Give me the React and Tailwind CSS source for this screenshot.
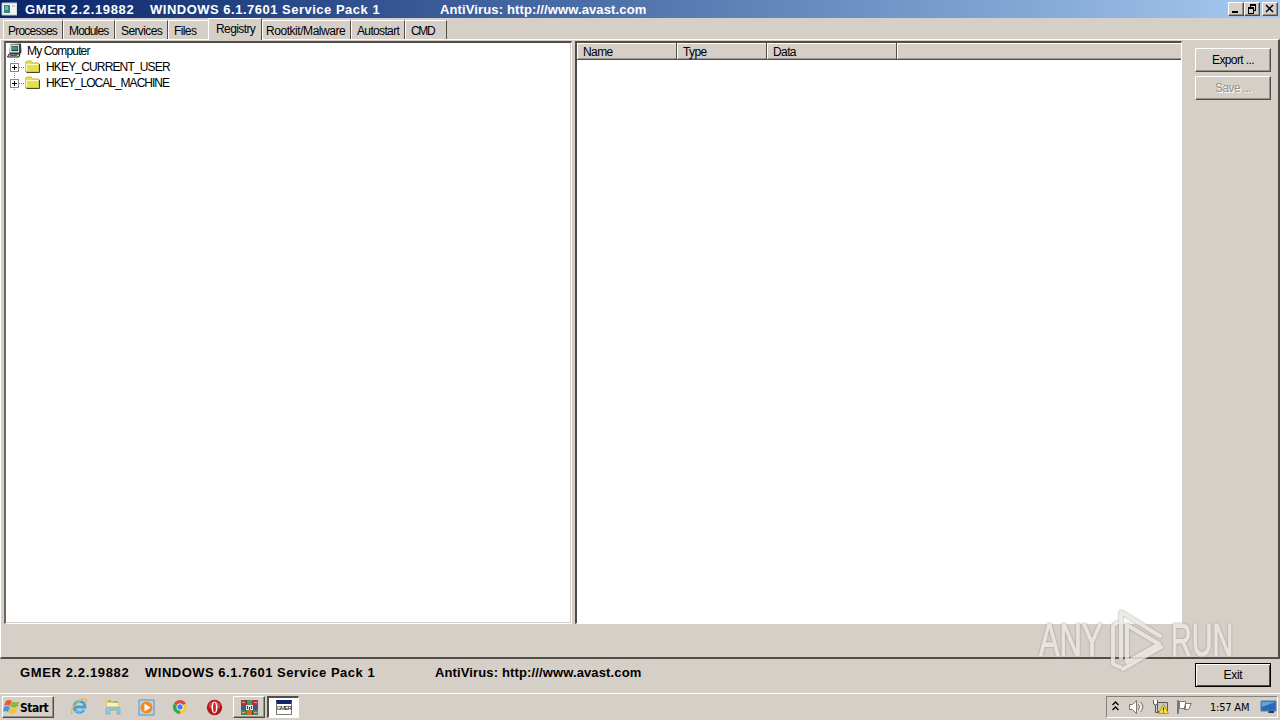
import { useState } from 'react';
import { clsx } from 'clsx';

const TABS = [
  { name: 'Processes', box: 'w-[60px] pl-[4px]', text: 'tracking-[-0.78px]' },
  { name: 'Modules', box: 'w-[52px] pl-[5px]', text: 'tracking-[-0.85px]' },
  { name: 'Services', box: 'w-[53px] pl-[5px]', text: 'tracking-[-0.6px]' },
  { name: 'Files', box: 'w-[40px] pl-[5px]', text: 'tracking-[-0.6px]' },
  { name: 'Registry', box: 'w-[54px] pl-[7px]', text: 'tracking-[-0.6px]' },
  { name: 'Rootkit/Malware', box: 'w-[89px] pl-[3px]', text: 'tracking-[-0.45px]' },
  { name: 'Autostart', box: 'w-[54px] pl-[5px]', text: 'tracking-[-0.65px]' },
  { name: 'CMD', box: 'w-[42px] pl-[5px]', text: 'tracking-[-1.3px]' },
];

const KEYS = [
  { name: 'HKEY_CURRENT_USER', text: 'tracking-[-0.84px]' },
  { name: 'HKEY_LOCAL_MACHINE', text: 'tracking-[-0.98px]' },
];

const COLUMNS = [
  { name: 'Name', width: 'w-[100px]' },
  { name: 'Type', width: 'w-[90px]' },
  { name: 'Data', width: 'w-[130px]' },
];

const raised = 'border border-t-white border-l-white border-r-[#504c48] border-b-[#504c48] shadow-[inset_-1px_-1px_0_#98928b]';

function VersionText() {
  return (
    <div className="flex whitespace-pre text-[13px] leading-[18px] font-bold">
      <span className="w-[125px] tracking-[0.63px]">GMER 2.2.19882</span>
      <span className="w-[290px] tracking-[0.5px]">WINDOWS 6.1.7601 Service Pack 1</span>
      <span className="tracking-[0.13px]">AntiVirus: http:///www.avast.com</span>
    </div>
  );
}

function CaptionButton({ children, className }) {
  return (
    <button className={clsx('h-[14px] w-4 bg-[#d6cfc8]', raised, className)}>
      <svg viewBox="0 0 14 12" className="block h-3 w-[14px]" fill="none" stroke="#000" shapeRendering="crispEdges">
        {children}
      </svg>
    </button>
  );
}

function TitleBar() {
  return (
    <div className="flex h-[18px] items-center bg-linear-to-r from-[#0a246a] to-[#a6caf0] pr-[2px] text-white">
      <svg width="16" height="16" viewBox="0 0 16 16" className="ml-[1px] shrink-0">
        <path d="M1 2h15v12H1z" fill="#f3f5f2" stroke="#b7c8ca" />
        <path d="M3 4h6v8H3z" fill="#33857e" />
        <path d="M4 5h3v4H4z" fill="#74b8a8" />
        <path d="M11 4h3v2h-3z" fill="#c9d0d0" />
      </svg>
      <div className="ml-[8px] grow pt-[1px]"><VersionText /></div>
      <CaptionButton><path d="M3 9h6" strokeWidth="2" /></CaptionButton>
      <CaptionButton>
        <path d="M5 2h6M3 5h6" strokeWidth="2" />
        <path d="M5.5 2v3M10.5 2v5.5H9M3.5 5v5.5h5V5" />
      </CaptionButton>
      <CaptionButton className="ml-[2px]">
        <path d="M3 2l7 7M10 2L3 9" strokeWidth="1.5" shapeRendering="auto" />
      </CaptionButton>
    </div>
  );
}

function TabStrip({ active, onSelect }) {
  return (
    <div className="flex h-[22px] items-end pl-[3px]">
      {TABS.map(({ name, box, text }) => (
        <button
          key={name}
          onClick={() => onSelect(name)}
          className={clsx(
            'whitespace-nowrap border-t border-l border-r border-t-white border-l-white text-left',
            box, text,
            active === name ? 'z-10 h-[22px] border-t-[#eeeae5] bg-[#d6cfc8] pb-[1px]' : 'mb-[1px] h-[19px] pt-[1px]',
            name === 'Files' && active === 'Registry' ? 'border-r-transparent' : 'border-r-[#504c48]'
          )}
        >
          {name}
        </button>
      ))}
    </div>
  );
}

function ComputerIcon() {
  return (
    <svg width="16" height="16" viewBox="0 0 16 16">
      <path d="M3 1l11-.5.5 9-2 2H2.5z" fill="#36413e" />
      <path d="M3 1.5h9v8H3z" fill="#d8dcd7" />
      <path d="M4.5 3h6.5v5H4.5z" fill="#18383b" />
      <path d="M5 3.5h5.5V7H5z" fill="#448d90" />
      <path d="M2 11h11l-1 3H.5z" fill="#cbc9c1" stroke="#292929" />
      <path d="M3 12.5h7" stroke="#565656" />
    </svg>
  );
}

function FolderIcon() {
  return (
    <svg width="16" height="16" viewBox="0 0 16 16">
      <path d="M0 12V4l2-2h4l2 2h6v9H1z" fill="#e2e04c" stroke="#c2b94a" />
      <path d="M1.5 11.5v-6h12" fill="none" stroke="#fffcbb" />
      <path d="M14.5 5v8.500H1.500" fill="none" stroke="#4b4720" />
    </svg>
  );
}

function RegistryTree() {
  return (
    <div className="w-[568px] border-t-2 border-l-2 border-r border-b border-t-[#504c48] border-l-[#6a6661] border-r-white border-b-white bg-white shadow-[inset_-1px_-1px_0_#d6cfc8]">
      <div className="flex h-4 items-center pl-[1px] tracking-[-0.86px]">
        <ComputerIcon />
        <span className="ml-1">My Computer</span>
      </div>
      {KEYS.map(({ name, text }) => (
        <div key={name} className="flex h-4 items-center pl-[3px]">
          <svg width="16" height="16" viewBox="0 0 16 16" fill="none" shapeRendering="crispEdges">
            <path d="M5.5 0v16M10 8.5h6" stroke="#888" strokeDasharray="1 1" />
            <path d="M1.5 4.5h8v8h-8z" fill="#fff" stroke="#888" />
            <path d="M3 8.5h5M5.5 6v5" stroke="#000" />
          </svg>
          <FolderIcon />
          <span className={clsx('ml-[5px]', text)}>{name}</span>
        </div>
      ))}
    </div>
  );
}

function ValueList() {
  return (
    <div className="ml-[3px] w-[607px] border-t-2 border-l-2 border-r border-b border-t-[#504c48] border-l-[#504c48] border-r-white border-b-white bg-white">
      <div className="flex h-[17px] border-b border-[#504c48] bg-[#d6cfc8] leading-4 shadow-[inset_0_1px_0_white,inset_0_-1px_0_#a09a93]">
        {COLUMNS.map(({ name, width }) => (
          <div key={name} className={clsx('border-l border-r border-l-white border-r-[#504c48] pt-[1px] pl-[5px] tracking-[-0.6px]', width)}>{name}</div>
        ))}
        <div className="grow border-l border-white" />
      </div>
    </div>
  );
}

function Watermark() {
  return (
    <div className="pointer-events-none absolute top-[608px] left-[1039px] flex h-16 w-[196px] items-center text-[47px] text-[#ebe8e4] opacity-85 drop-shadow-[0_0_1px_#918b84] [-webkit-text-stroke:1.2px_#ebe8e4]">
      <span className="w-[70px] origin-left scale-x-[0.655] whitespace-nowrap">ANY</span>
      <svg width="62" height="64" viewBox="0 0 62 64" fill="none" stroke="currentColor" strokeWidth="4" strokeLinecap="round" strokeLinejoin="round" className="shrink-0">
        <path d="M8 15l-4 3v38l7 3" />
        <path d="M12 50V4l39 24" />
        <path d="M18 17l32 19-32 18z" />
        <path d="M14 61l38-22" />
      </svg>
      <span className="origin-left scale-x-[0.61] whitespace-nowrap">RUN</span>
    </div>
  );
}

function TaskbarIcons() {
  return (
    <div className="flex items-center">
      <svg width="18" height="18" viewBox="0 0 18 18" className="ml-[16px]" fill="none">
        <path d="M14 12a5.5 5.5 0 1 1 1-3H5" stroke="#3fa0dc" strokeWidth="2.8" />
        <path d="M13 11.5a5 5 0 0 1-8 1" stroke="#85cdf0" />
        <path d="M2 16C-1 11 11-1 16 1.500c1.500 1 0 3-1 4.500" stroke="#dfb94c" strokeWidth="1.5" />
      </svg>
      <svg width="18" height="18" viewBox="0 0 18 18" className="ml-4">
        <path d="M2 2h5l1 1h7v10H2z" fill="#e5c968" />
        <path d="M3 5h11v6H3z" fill="#fff2ad" />
        <path d="M4 3h3M9 4h5" stroke="#56a6a3" />
        <path d="M2 16v-5q0-2 2-2h10q2 0 2 2v5h-3v-4H6v4z" fill="#8dc8e9" stroke="#62a8d0" strokeWidth=".6" />
      </svg>
      <svg width="17" height="17" viewBox="0 0 17 17" className="ml-4">
        <path d="M1 1h15v15H1z" fill="#b5d6ea" stroke="#5d91b5" />
        <circle cx="8.5" cy="8.5" r="6" fill="#f48a1c" />
        <path d="M6.5 4.5l6 4-6 4z" fill="#fff" />
      </svg>
      <svg width="16" height="16" viewBox="0 0 16 16" className="ml-[17px]">
        <path d="M8 8L1.900 4.500A7 7 0 0 1 14 4.500z" fill="#dd493c" />
        <path d="M8 8L1.900 4.500A7 7 0 0 0 8 15z" fill="#36a554" />
        <path d="M8 8l6-3.500A7 7 0 0 1 8 15z" fill="#f3cb3c" />
        <circle cx="8" cy="8" r="3.5" fill="#fff" />
        <circle cx="8" cy="8" r="2.7" fill="#4285d8" />
      </svg>
      <svg width="17" height="17" viewBox="0 0 17 17" className="ml-[18px]">
        <circle cx="8.5" cy="8.5" r="7.7" fill="#b3161d" />
        <path d="M3 5a7 7 0 0 1 11 0v4H3z" fill="#d84345" />
        <ellipse cx="8.5" cy="8.5" rx="3" ry="6" fill="#fff" />
        <ellipse cx="8.5" cy="8.5" rx="1.4" ry="5" fill="#c5262c" />
      </svg>
      <div className={clsx('ml-[10px] flex h-[22px] w-8 items-center justify-center', raised)}>
        <svg width="17" height="17" viewBox="0 0 17 17" shapeRendering="crispEdges">
          <path d="M0 1h6v5H0zM11 1h6v5h-6z" fill="#b63038" />
          <path d="M6 1h5v5H6z" fill="#409b54" />
          <path d="M0 6h17v5H0z" fill="#3d55a0" />
          <path d="M0 11h6v5H0zM11 11h6v5h-6z" fill="#37914a" />
          <path d="M6 11h5v5H6z" fill="#d06a2c" />
          <path d="M5 6h7v5H5z" fill="#e3e0db" />
          <path d="M6.500 7v3M8.500 8v3M10.500 7v3M5.500 1v4M11.500 12v4" stroke="#5a393c" />
          <path d="M1 3h3M13 3h3M1 13h3M13 13h3" stroke="#e0a1a0" />
        </svg>
      </div>
      <div className="ml-[2px] flex h-[22px] w-8 items-center justify-center border-t-2 border-l-2 border-r border-b border-t-[#504c48] border-l-[#504c48] border-white bg-white">
        <div className="h-[15px] w-4 border border-[#777] border-t-4 border-t-[#10236c] bg-white text-center text-[6px] leading-[9px] tracking-[-0.9px]">GMER</div>
      </div>
    </div>
  );
}

function SystemTray() {
  return (
    <div className="mr-[2px] ml-auto flex h-[22px] w-[172px] items-center border border-t-[#87827c] border-l-[#87827c] border-r-white border-b-white">
      <svg width="7" height="10" viewBox="0 0 7 10" className="mb-[2px] ml-[5px]" fill="none" stroke="#000" strokeWidth="1.4">
        <path d="M.5 4l3-3 3 3M.5 9l3-3 3 3" />
      </svg>
      <svg width="17" height="16" viewBox="0 0 17 16" className="ml-[9px]" fill="none" stroke="#777">
        <path d="M1.500 5.500h3l4-4v13l-4-4h-3z" fill="#fff" />
        <path d="M10.500 5q2 3 0 6M12.500 3q5 5 0 10" />
        <path d="M11.500 4q3 4 0 8" stroke="#fff" />
      </svg>
      <svg width="17" height="16" viewBox="0 0 17 16" className="ml-[7px]">
        <path d="M5.500 3.500h10v9h-10z" fill="#c7c7c2" stroke="#595955" />
        <path d="M3.500 5v8.500h4" fill="none" stroke="#555" />
        <path d="M1.500 1v3q0 2 2 2t2-2V1" fill="#fff" stroke="#555" />
        <path d="M11.500 5.500l5 9h-10z" fill="#ffdf32" stroke="#bd981c" />
        <path d="M11.500 8.500v3M11.500 12.500v1" stroke="#332b14" />
      </svg>
      <svg width="17" height="16" viewBox="0 0 17 16" className="ml-[7px]" fill="#fff" stroke="#777">
        <path d="M1.500 1.500h1v13h-1zM9.500 4.500h6l-3 6H8zM3.500 2.500h6v7h-6z" />
      </svg>
      <span className="ml-[17px] w-[50px] whitespace-nowrap pt-[1px] font-['DejaVu_Sans_Condensed','DejaVu_Sans',sans-serif] text-[11px] tracking-[-0.2px]">1:57 AM</span>
      <svg width="17" height="16" viewBox="0 0 17 16">
        <path d="M1 2h15v10H1z" fill="#286ab5" stroke="#547eac" />
        <path d="M1.500 3h14L2 8z" fill="#63a4da" />
        <path d="M9 12h5v2H8z" fill="#223b60" />
      </svg>
    </div>
  );
}

function Taskbar() {
  return (
    <div className="flex h-[27px] items-center border-t border-white pl-[2px]">
      <button className={clsx('flex h-[22px] w-[52px] items-center', raised)}>
        <svg width="17" height="16" viewBox="0 0 17 16" className="shrink-0">
          <path d="M3 2q3-2 6 0L7 7Q4 5 1 7z" fill="#e95e2b" />
          <path d="M9.500 2.500q3 2 7 0l-2 5q-3 2-7 0z" fill="#82b83d" />
          <path d="M1 8q3-2 6 0l-2 5q-3-2-5 0z" fill="#4797d5" />
          <path d="M7.500 8.500q3 2 7 0l-2 5q-3 2-7 0z" fill="#f3c334" />
        </svg>
        <span className="pt-[1px] font-['DejaVu_Sans_Condensed','DejaVu_Sans',sans-serif] text-[12px] font-bold tracking-[-0.5px]">Start</span>
      </button>
      <TaskbarIcons />
      <SystemTray />
    </div>
  );
}

export default function App() {
  const [active, setActive] = useState('Registry');

  return (
    <div className="relative flex h-[720px] w-[1280px] flex-col overflow-hidden bg-[#d6cfc8] font-['Liberation_Sans',Arial,sans-serif] text-[12px] leading-4 text-black">
      <TitleBar />
      <TabStrip active={active} onSelect={setActive} />
      <div className="-mt-px flex h-[620px] border-t border-l border-r-2 border-b-2 border-t-white border-l-white border-r-[#504c48] border-b-[#504c48] pt-[1px] pl-[3px]">
        <div className="flex h-[583px]">
          <RegistryTree />
          <ValueList />
        </div>
        <div className="ml-[13px] flex flex-col gap-1 pt-[7px]">
          <button className={clsx('h-6 w-[76px] tracking-[-0.6px]', raised)}>Export ...</button>
          <button disabled className={clsx('h-6 w-[76px] tracking-[-0.6px] text-[#98928b] [text-shadow:1px_1px_0_white]', raised)}>Save ...</button>
        </div>
      </div>
      <div className="flex h-[34px] pl-5">
        <div className="grow pt-[5px]"><VersionText /></div>
        <button className="mt-1 mr-[9px] h-6 w-[76px] border border-black tracking-[-0.3px] shadow-[inset_1px_1px_0_white,inset_-1px_-1px_0_#504c48]">Exit</button>
      </div>
      <Taskbar />
      <Watermark />
    </div>
  );
}
